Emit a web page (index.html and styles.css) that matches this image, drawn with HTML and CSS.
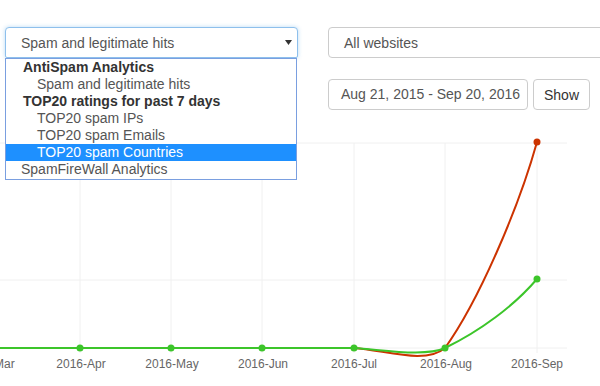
FILE: index.html
```html
<!DOCTYPE html>
<html lang="en">
<head>
  <meta charset="UTF-8" />
  <title>Analytics</title>
  <link rel="stylesheet" href="styles.css">
</head>
<body>
  <div class="filters">
    <div class="select-wrap">
      <div class="select focused">
        <span>Spam and legitimate hits</span>
        <svg class="caret" width="7" height="5" viewBox="0 0 7 5"><polygon points="0,0 7,0 3.5,5" fill="#333"/></svg>
      </div>
      <ul class="options">
        <li class="group">AntiSpam Analytics</li>
        <li class="sub">Spam and legitimate hits</li>
        <li class="group">TOP20 ratings for past 7 days</li>
        <li class="sub">TOP20 spam IPs</li>
        <li class="sub">TOP20 spam Emails</li>
        <li class="sub active">TOP20 spam Countries</li>
        <li class="top">SpamFireWall Analytics</li>
      </ul>
    </div>
    <div class="select sites"><span>All websites</span></div>
  </div>

  <div class="range">
    <div class="date-input">Aug 21, 2015 - Sep 20, 2016</div>
    <button class="show-btn">Show</button>
  </div>

  <svg class="chart" width="600" height="276" viewBox="0 110 600 276">
    <g class="grid">
      <line x1="0" y1="143" x2="567" y2="143"/>
      <line x1="0" y1="280" x2="567" y2="280"/>
      <line x1="0" y1="348" x2="567" y2="348"/>
      <line x1="80" y1="143" x2="80" y2="353"/>
      <line x1="171" y1="143" x2="171" y2="353"/>
      <line x1="262" y1="143" x2="262" y2="353"/>
      <line x1="354" y1="143" x2="354" y2="353"/>
      <line x1="445" y1="143" x2="445" y2="353"/>
      <line x1="537" y1="143" x2="537" y2="353"/>
    </g>

    <!-- spam -->
    <path class="line red" d="M0,348 L354,348 C385,350 425,365 445,348 C478,302 518,210 537,142"/>
    <circle class="dot red-dot" cx="537" cy="142" r="3.5"/>

    <!-- legitimate -->
    <path class="line green" d="M0,348 L354,348 C385,350 425,357 445,348 C480,331 514,306 537,279"/>
    <circle class="dot green-dot" cx="80" cy="348" r="3.5"/>
    <circle class="dot green-dot" cx="171" cy="348" r="3.5"/>
    <circle class="dot green-dot" cx="262" cy="348" r="3.5"/>
    <circle class="dot green-dot" cx="354" cy="348" r="3.5"/>
    <circle class="dot green-dot" cx="445" cy="348" r="3.5"/>
    <circle class="dot green-dot" cx="537" cy="279" r="3.5"/>

    <g class="labels">
      <text x="-11" y="368">2016-Mar</text>
      <text x="81" y="368">2016-Apr</text>
      <text x="172" y="368">2016-May</text>
      <text x="263" y="368">2016-Jun</text>
      <text x="354" y="368">2016-Jul</text>
      <text x="446" y="368">2016-Aug</text>
      <text x="537" y="368">2016-Sep</text>
    </g>
  </svg>
</body>
</html>
```

FILE: styles.css
```css
body {
  margin: 0;
  font-family: 'Liberation Sans', Arial, sans-serif;
  font-size: 14px;
  color: #555;
  background: #fff;
  overflow: hidden;
}

.filters {
  display: flex;
  padding: 27px 0 0 5px;
  gap: 30px;
}

.select-wrap {
  position: relative;
  width: 293px;
  flex-shrink: 0;
  z-index: 2;
}

.select {
  box-sizing: border-box;
  height: 31px;
  border: 1px solid #ccc;
  border-radius: 4px;
  padding: 0 15px;
  display: flex;
  align-items: center;
  justify-content: space-between;
  background: #fff;
}

.select.focused {
  border-color: #8ec0ec;
  box-shadow: 0 0 4px rgba(102, 175, 233, 0.45);
  border-bottom-left-radius: 2px;
  border-bottom-right-radius: 2px;
  padding-right: 5px;
}

.caret {
  display: block;
}

.sites {
  width: 300px;
  flex-shrink: 0;
}

.options {
  position: absolute;
  top: 31px;
  left: 0;
  width: 292px;
  box-sizing: border-box;
  margin: 0;
  padding: 0 0 1px;
  list-style: none;
  background: #fff;
  border: 1px solid #7a9fe0;
}

.options li {
  height: 17px;
  line-height: 17px;
  white-space: nowrap;
}

.options .group {
  font-weight: bold;
  color: #333;
  padding-left: 17px;
}

.options .sub {
  padding-left: 31px;
}

.options .top {
  padding-left: 15px;
}

.options .active {
  background: #1e90ff;
  color: #fff;
}

.range {
  display: flex;
  gap: 5px;
  margin: 21px 0 0 328px;
}

.date-input {
  box-sizing: border-box;
  width: 200px;
  height: 31px;
  line-height: 29px;
  padding: 0 12px;
  border: 1px solid #ccc;
  border-radius: 4px;
  white-space: nowrap;
}

.show-btn {
  box-sizing: border-box;
  width: 57px;
  height: 31px;
  border: 1px solid #ccc;
  border-radius: 4px;
  background: #fff;
  color: #333;
  font-family: inherit;
  font-size: 14px;
  padding: 0;
}

.chart {
  display: block;
}

.grid line {
  stroke: #f0f0f0;
  stroke-width: 1;
}

.line {
  fill: none;
  stroke-width: 2;
}

.red {
  stroke: #cc3300;
}

.green {
  stroke: #3cc52a;
}

.red-dot {
  fill: #cc3300;
}

.green-dot {
  fill: #3cc52a;
}

.labels text {
  font-family: 'Liberation Sans', Arial, sans-serif;
  font-size: 12px;
  fill: #666;
  text-anchor: middle;
}
```
